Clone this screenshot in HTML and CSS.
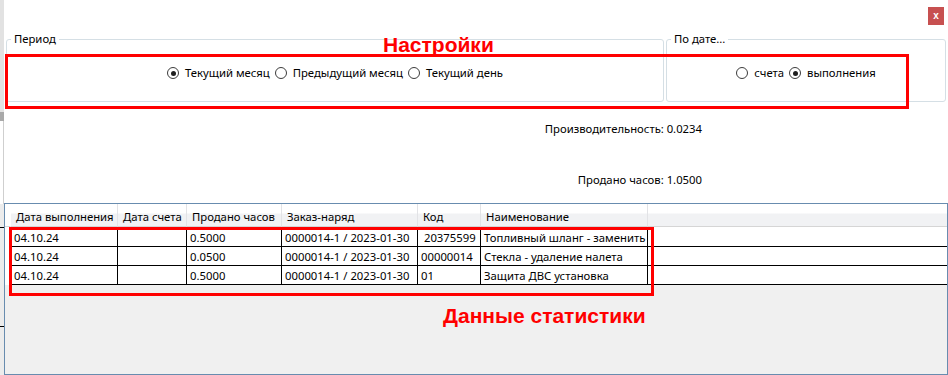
FILE: index.html
```html
<!DOCTYPE html>
<html lang="ru">
<head>
    <meta charset="utf-8">
    <title>Статистика</title>
    <link rel="stylesheet" href="styles.css">
</head>
<body>
    <div class="screen">
        <!-- strip of the window lying behind -->
        <div class="edge">
            <div class="edge-top"></div>
            <div class="edge-shade"></div>
            <div class="edge-mid"></div>
            <div class="edge-low">
                <div class="edge-tick edge-tick-a"></div>
                <div class="edge-tick edge-tick-b"></div>
            </div>
        </div>

        <div class="window">
            <div class="titlebar">
                <button class="close-btn" type="button">x</button>
            </div>

            <div class="filters">
                <fieldset class="group group-period">
                    <legend>Период</legend>
                    <div class="radios">
                        <label class="radio"><input type="radio" name="period" checked>Текущий месяц</label>
                        <label class="radio"><input type="radio" name="period">Предыдущий месяц</label>
                        <label class="radio"><input type="radio" name="period">Текущий день</label>
                    </div>
                </fieldset>
                <fieldset class="group group-date">
                    <legend>По дате...</legend>
                    <div class="radios">
                        <label class="radio"><input type="radio" name="bydate">счета</label>
                        <label class="radio"><input type="radio" name="bydate" checked>выполнения</label>
                    </div>
                </fieldset>
            </div>

            <div class="stats">
                <div class="stat stat-perf">Производительность: 0.0234</div>
                <div class="stat stat-hours">Продано часов: 1.0500</div>
            </div>

            <div class="grid">
                <table class="grid-table">
                    <colgroup>
                        <col class="col-rowhead">
                        <col class="col-done">
                        <col class="col-bill">
                        <col class="col-hours">
                        <col class="col-order">
                        <col class="col-code">
                        <col class="col-name">
                        <col>
                    </colgroup>
                    <thead>
                        <tr>
                            <th class="rowhead"></th>
                            <th class="first">Дата выполнения</th>
                            <th>Дата счета</th>
                            <th>Продано часов</th>
                            <th>Заказ-наряд</th>
                            <th>Код</th>
                            <th>Наименование</th>
                            <th class="filler"></th>
                        </tr>
                    </thead>
                    <tbody>
                        <tr>
                            <td class="rowhead"></td>
                            <td class="first">04.10.24</td>
                            <td></td>
                            <td>0.5000</td>
                            <td>0000014-1 / 2023-01-30</td>
                            <td>&nbsp;20375599</td>
                            <td>Топливный шланг - заменить</td>
                            <td class="filler"></td>
                        </tr>
                        <tr>
                            <td class="rowhead"></td>
                            <td class="first">04.10.24</td>
                            <td></td>
                            <td>0.0500</td>
                            <td>0000014-1 / 2023-01-30</td>
                            <td>00000014</td>
                            <td>Стекла - удаление налета</td>
                            <td class="filler"></td>
                        </tr>
                        <tr>
                            <td class="rowhead"></td>
                            <td class="first">04.10.24</td>
                            <td></td>
                            <td>0.5000</td>
                            <td>0000014-1 / 2023-01-30</td>
                            <td>01</td>
                            <td>Защита ДВС установка</td>
                            <td class="filler"></td>
                        </tr>
                    </tbody>
                </table>
            </div>

            <!-- annotations drawn over the window -->
            <div class="note-box note-settings"></div>
            <div class="note-label note-label-settings">Настройки</div>
            <div class="note-box note-data"></div>
            <div class="note-label note-label-data">Данные статистики</div>
        </div>
    </div>
</body>
</html>
```

FILE: styles.css
```css
:root {
    --text-color: #000;
    --group-border: #d5dfe5;
    --grid-border: #688caf;
    --grid-bg: #f0f0f0;
    --header-bottom: #d5d5d5;
    --header-sep: #e2e3e6;
    --mark-color: #ff0000;
}

* {
    box-sizing: border-box;
}

html, body {
    margin: 0;
    height: 100%;
}

body {
    font-family: "Noto Sans", "Open Sans", sans-serif;
    font-size: 11.3px;
    line-height: 16px;
    color: var(--text-color);
    background: #fff;
    overflow: hidden;
}

.screen {
    display: flex;
    height: 375px;
}

/* Left strip */
.edge {
    width: 4px;
    flex: none;
    display: flex;
    flex-direction: column;
}

.edge-top {
    height: 112px;
    background: #e2e2e2;
}

.edge-shade {
    height: 9px;
    background: #a9a9a9;
}

.edge-mid {
    height: 83px;
    background: #fff;
    border-right: 1px solid #cfcfcf;
}

.edge-low {
    flex: 1;
    background: #ececec;
    padding-top: 23px;
}

.edge-tick {
    height: 1px;
    background: #000;
}

.edge-tick-b {
    margin-top: 98px;
}

/* Window */
.window {
    position: relative;
    flex: 1;
    display: flex;
    flex-direction: column;
    background: #fff;
}

.titlebar {
    height: 31px;
    display: flex;
    justify-content: flex-end;
    align-items: flex-start;
    padding: 7px 4px 0 0;
}

.close-btn {
    width: 16px;
    height: 18px;
    border: 0;
    padding: 0;
    background: #c75050;
    color: #fff;
    font: bold 10px/16px "Liberation Sans", sans-serif;
}

.filters {
    display: flex;
    gap: 2px;
    padding: 0 2px;
}

.group {
    margin: 0;
    min-width: 0;
    border: 1px solid var(--group-border);
    border-radius: 3px;
    padding: 18px 0 20px;
}

.group legend {
    margin-left: 4px;
    padding: 0 3px;
    line-height: 16px;
}

.group-period {
    width: 658px;
    flex: none;
}

.group-date {
    flex: 1;
}

.radios {
    display: flex;
    justify-content: center;
    align-items: center;
    gap: 5px;
}

.radio {
    display: flex;
    align-items: center;
    gap: 6px;
}

.radio input {
    appearance: none;
    margin: 0;
    width: 12px;
    height: 12px;
    border: 1px solid #3c3c3c;
    border-radius: 50%;
    background: #fff;
    display: grid;
    place-items: center;
}

.radio input:checked::before {
    content: "";
    width: 5px;
    height: 5px;
    border-radius: 50%;
    background: #1e1e1e;
}

/* Totals */
.stats {
    display: flex;
    flex-direction: column;
    align-items: flex-end;
    padding-right: 246px;
}

.stat-perf {
    margin-top: 19px;
}

.stat-hours {
    margin-top: 35px;
}

/* Data grid */
.grid {
    margin-top: 15px;
    flex: 1;
    border: 1px solid var(--grid-border);
    background: var(--grid-bg);
}

.grid-table {
    width: 100%;
    table-layout: fixed;
    border-collapse: separate;
    border-spacing: 0;
    background: #fff;
}

.col-rowhead { width: 5px; }
.col-done { width: 108px; }
.col-bill { width: 69px; }
.col-hours { width: 95px; }
.col-order { width: 136px; }
.col-code { width: 63px; }
.col-name { width: 167px; }

.grid-table th,
.grid-table td {
    white-space: nowrap;
    overflow: hidden;
    text-align: left;
    font-weight: normal;
}

.grid-table th {
    height: 23px;
    padding: 5px 5px 1px;
    background: linear-gradient(to bottom, #fff 0, #fff 9px, #f1f2f4 10px, #f1f2f4 100%);
    border-right: 1px solid var(--header-sep);
    border-bottom: 1px solid var(--header-bottom);
}

.grid-table th.first {
    border-left: 1px solid #fff;
}

.grid-table th.rowhead,
.grid-table th.filler {
    border-right: 0;
    padding: 0;
}

.grid-table th.rowhead {
    background: #fff;
}

.grid-table td {
    height: 19px;
    padding: 2px 3px 0;
    border-right: 1px solid #000;
    border-bottom: 1px solid #000;
}

.grid-table td.first {
    border-left: 1px solid #000;
}

.grid-table tbody tr:first-child td {
    height: 20px;
    border-top: 1px solid #000;
}

.grid-table td.rowhead {
    border: 0;
    padding: 0;
}

.grid-table tbody tr:first-child td.rowhead,
.grid-table tbody tr:first-child td.filler {
    border-top-color: #fff;
}

.grid-table td.filler {
    border-right: 0;
}

/* Red annotations */
.note-box {
    position: absolute;
    border: 3px solid var(--mark-color);
    pointer-events: none;
}

.note-settings {
    left: 1px;
    top: 54px;
    width: 904px;
    height: 55px;
}

.note-data {
    left: 5px;
    top: 227px;
    width: 645px;
    height: 69px;
}

.note-label {
    position: absolute;
    color: var(--mark-color);
    font: bold 21px/24px "Liberation Sans", Arial, sans-serif;
    white-space: nowrap;
}

.note-label-settings {
    left: 379px;
    top: 33px;
}

.note-label-data {
    left: 439px;
    top: 304px;
}
```
